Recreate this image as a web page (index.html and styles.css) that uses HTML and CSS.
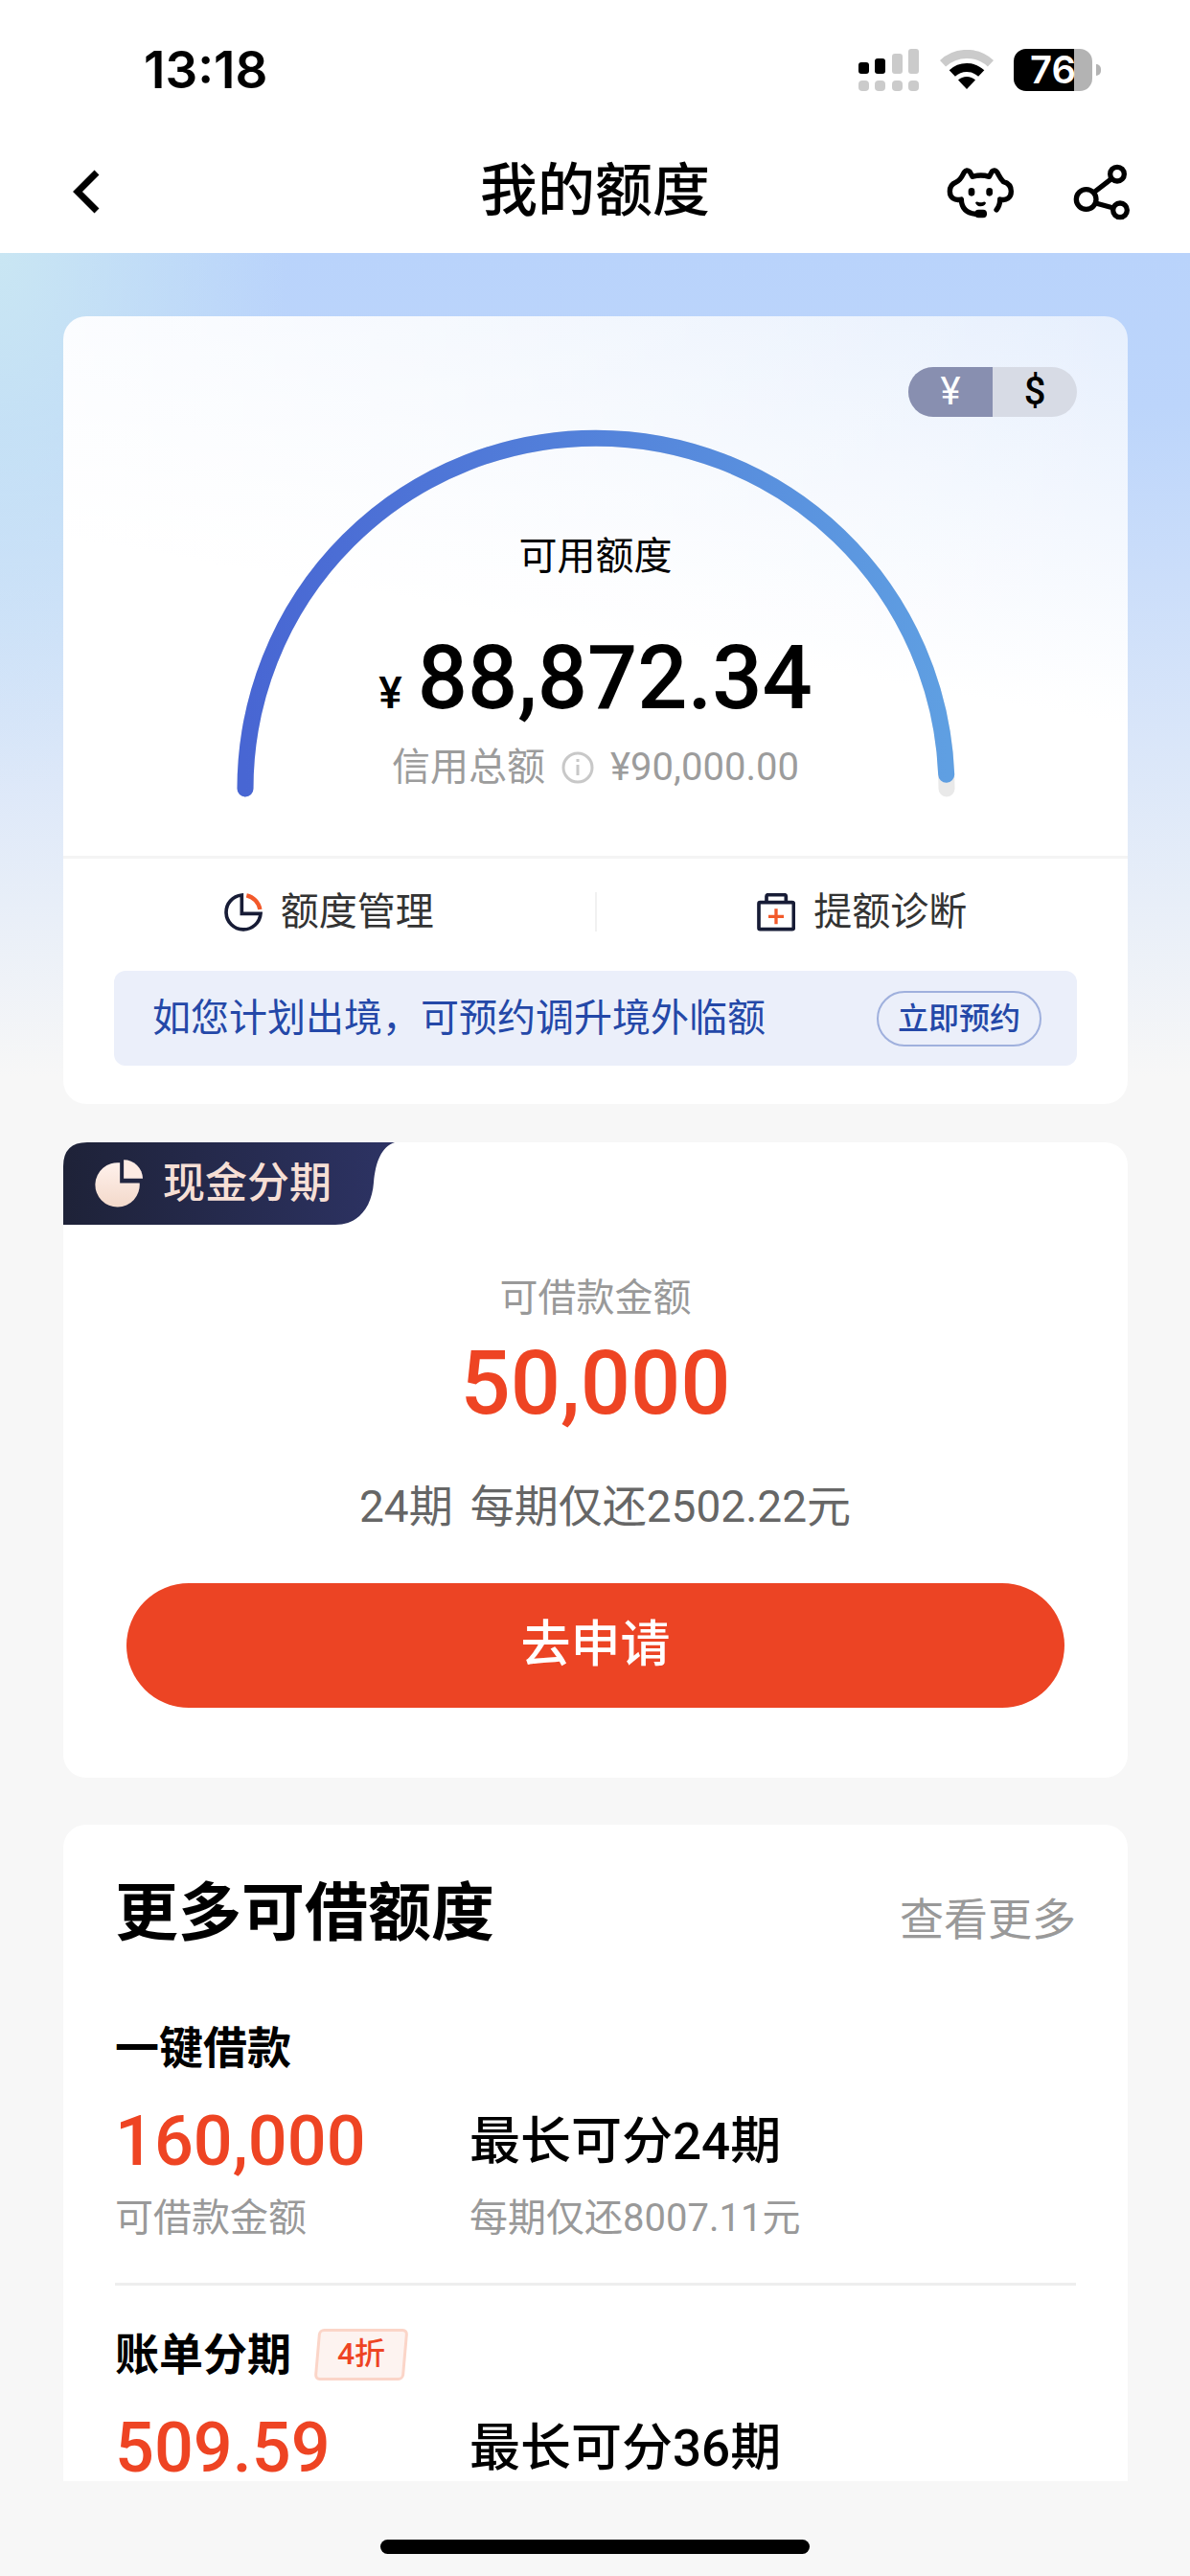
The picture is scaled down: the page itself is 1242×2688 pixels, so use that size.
FILE: index.html
```html
<!DOCTYPE html>
<html lang="zh-CN">
<head>
<meta charset="utf-8">
<meta name="viewport" content="width=device-width, initial-scale=1">
<title>我的额度</title>
<link rel="stylesheet" href="styles.css">
</head>
<body>
<div class="status">
  <span class="status-time">13:18</span>
  <div class="status-icons">
    <svg class="signal" viewBox="0 0 64 44" aria-hidden="true">
      <rect x="0" y="14" width="11" height="12" rx="3"/>
      <rect x="17" y="10" width="11" height="16" rx="3"/>
      <g fill="#cbcbcb">
        <rect x="35" y="5" width="11" height="21" rx="3"/>
        <rect x="52" y="0" width="11" height="26" rx="3"/>
        <rect x="0" y="33" width="11" height="11" rx="4"/>
        <rect x="17" y="33" width="11" height="11" rx="4"/>
        <rect x="35" y="33" width="11" height="11" rx="4"/>
        <rect x="52" y="33" width="11" height="11" rx="4"/>
      </g>
    </svg>
    <svg class="wifi" viewBox="0 0 56 42" aria-hidden="true">
      <path d="M3 14.3A36.5 36.5 0 0 1 53 14.3" fill="none" stroke="#cbcbcb" stroke-width="9"/>
      <path d="M12.8 24.6A22 22 0 0 1 43.2 24.6" fill="none" stroke="#000" stroke-width="9"/>
      <path d="M28 41L19 31.5A13 13 0 0 1 37 31.5Z"/>
    </svg>
    <span class="battery">76</span>
  </div>
</div>

<header class="nav">
  <button class="icon-btn" type="button" aria-label="返回">
    <svg class="chevron" viewBox="0 0 30 48"><path d="M26 4L6 24L26 44" fill="none" stroke="#000" stroke-width="7"/></svg>
  </button>
  <h1 class="nav-title">我的额度</h1>
  <div class="nav-tools">
    <button class="icon-btn" type="button" aria-label="客服">
      <svg class="dog" viewBox="375 455 219 165">
        <path d="M534 593Q545 580 545 560C566 566 580 554 580 535C580 518 570 509 556 505C546 496 541 483 536 475Q528 465 520 473L511 489Q485 481 459 489L450 473Q440 465 433 475C427 487 421 501 408 506C395 511 388 522 388 535C388 554 402 566 424 560Q425 602 470 606" fill="none" stroke="#000" stroke-width="16" stroke-linejoin="round" stroke-linecap="round"/>
        <rect x="466" y="592" width="38" height="26" rx="12"/>
        <path d="M468 571Q470 566 476 568Q485 571 493 568Q500 566 501 572Q496 582 485 582Q473 582 468 571Z"/>
        <rect x="446" y="524" width="20" height="26" rx="10"/>
        <rect x="502" y="524" width="20" height="26" rx="10"/>
      </svg>
    </button>
    <button class="icon-btn" type="button" aria-label="分享">
      <svg class="share" viewBox="778 452 177 177" fill="none" stroke="#000" stroke-width="16">
        <circle cx="819" cy="563" r="31"/>
        <circle cx="916" cy="484" r="22"/>
        <circle cx="925" cy="597" r="22"/>
        <path d="M842 542L899 498M849 575L904 590"/>
      </svg>
    </button>
  </div>
</header>

<main class="page">
  <section class="card limit">
    <div class="currency">
      <button class="currency-item is-active" type="button">¥</button>
      <button class="currency-item" type="button">$</button>
    </div>

    <div class="gauge">
      <svg class="gauge-arc" viewBox="0 0 750 384" aria-hidden="true">
        <defs>
          <linearGradient id="arc" x1="0" x2="1" y1="0" y2="0">
            <stop offset="0" stop-color="#4866d3"/>
            <stop offset="1" stop-color="#5f9fe2"/>
          </linearGradient>
        </defs>
        <path d="M9 375A366 366 0 0 1 741 375" fill="none" stroke="#e9e9e9" stroke-width="17" stroke-linecap="round"/>
        <path d="M9 375A366 366 0 0 1 741 375" pathLength="1000" stroke-dasharray="987 1000" fill="none" stroke="url(#arc)" stroke-width="17" stroke-linecap="round"/>
      </svg>
      <div class="gauge-text">
        <p class="gauge-label">可用额度</p>
        <p class="gauge-amount"><span class="yen">¥</span>88,872.34</p>
        <p class="gauge-total">信用总额
          <svg class="info" viewBox="0 0 34 34" aria-hidden="true">
            <circle cx="17" cy="17" r="15" fill="none" stroke="#c8c8c8" stroke-width="3"/>
            <path d="M17 14V25M17 8V11" stroke="#c8c8c8" stroke-width="3"/>
          </svg>
          ¥90,000.00</p>
      </div>
    </div>

    <div class="actions">
      <a class="action" href="#manage">
        <svg class="action-icon" viewBox="101 98 120 120" fill="none" aria-hidden="true">
          <path d="M156 104V162H215A54 54 0 1 1 156 104Z" stroke="#171c36" stroke-width="11"/>
          <path d="M171 105A54 54 0 0 1 213 149" stroke="#f2592a" stroke-width="13"/>
        </svg>
        额度管理
      </a>
      <a class="action" href="#diagnose">
        <svg class="action-icon" viewBox="90 98 120 120" fill="none" aria-hidden="true">
          <rect x="96" y="127" width="109" height="84" rx="4" stroke="#171c36" stroke-width="11"/>
          <path d="M120 127V108Q120 103 125 103H176Q181 103 181 108V127" stroke="#171c36" stroke-width="11"/>
          <path d="M150 147V195M126 171H174" stroke="#f2592a" stroke-width="10"/>
        </svg>
        提额诊断
      </a>
    </div>

    <div class="notice">
      <span>如您计划出境，可预约调升境外临额</span>
      <button class="notice-btn" type="button">立即预约</button>
    </div>
  </section>

  <section class="card cash">
    <h2 class="tab">
      <svg class="tab-shape" viewBox="0 0 346 86" aria-hidden="true">
        <defs>
          <linearGradient id="tab" x1="0" x2="1" y1="0" y2="0">
            <stop offset="0" stop-color="#1e2238"/>
            <stop offset="1" stop-color="#2d3364"/>
          </linearGradient>
        </defs>
        <path d="M25 0H346C332 5 326 20 324 42C322 68 308 86 284 86H0V25Q0 0 25 0Z" fill="url(#tab)"/>
      </svg>
      <span class="tab-label">
        <svg class="tab-icon" viewBox="177 114 151 151" aria-hidden="true">
          <defs>
            <linearGradient id="pie" x1="0" x2="0" y1="0" y2="1">
              <stop offset="0" stop-color="#fff1ec"/>
              <stop offset="1" stop-color="#f3d9ca"/>
            </linearGradient>
          </defs>
          <path d="M256 124V188H318A70 70 0 1 1 256 124Z" fill="url(#pie)"/>
          <path d="M268 115A60 60 0 0 1 328 174H268Z" fill="#fdebe4"/>
        </svg>
        现金分期
      </span>
    </h2>
    <p class="cash-label">可借款金额</p>
    <p class="cash-amount">50,000</p>
    <p class="cash-plan"><span>24期</span><span>每期仅还2502.22元</span></p>
    <button class="apply" type="button">去申请</button>
  </section>

  <section class="card more">
    <div class="more-head">
      <h2 class="more-title">更多可借额度</h2>
      <a class="more-link" href="#more">查看更多</a>
    </div>
    <article class="offer">
      <h3 class="offer-name">一键借款</h3>
      <div class="offer-grid">
        <span class="offer-amount">160,000</span>
        <span class="offer-term">最长可分24期</span>
      </div>
      <div class="offer-grid offer-notes">
        <span>可借款金额</span>
        <span>每期仅还8007.11元</span>
      </div>
    </article>
    <article class="offer">
      <h3 class="offer-name">账单分期 <span class="badge">4折</span></h3>
      <div class="offer-grid">
        <span class="offer-amount">509.59</span>
        <span class="offer-term">最长可分36期</span>
      </div>
    </article>
  </section>
</main>

<footer class="home"><div class="home-bar"></div></footer>
</body>
</html>
```

FILE: styles.css
```css
* {
  box-sizing: border-box;
}

body {
  margin: 0;
  background: #f7f7f7;
  color: #000;
  font-family: Roboto, "Noto Sans CJK SC", sans-serif;
  font-size: 40px;
  line-height: 56px;
}

h1, h2, h3, p {
  margin: 0;
  font-weight: 500;
}

svg {
  display: block;
  flex: none;
}

button {
  padding: 0;
  border: 0;
  background: none;
  color: inherit;
  font: inherit;
}

a {
  color: inherit;
  text-decoration: none;
}

/* status bar */
.status {
  display: flex;
  align-items: center;
  justify-content: space-between;
  height: 136px;
  padding: 10px 102px 0 150px;
  background: #fff;
}

.status-time {
  font-family: Inter, sans-serif;
  font-size: 53px;
  font-weight: 600;
  line-height: 60px;
}

.status-icons {
  display: flex;
  align-items: center;
  gap: 21px;
}

.signal {
  width: 64px;
  height: 44px;
}

.wifi {
  width: 56px;
  height: 42px;
}

.battery {
  position: relative;
  width: 82px;
  height: 44px;
  border-radius: 13px;
  background: linear-gradient(90deg, #000 63px, #b3b3b3 63px);
  color: #fff;
  font-family: Inter, sans-serif;
  font-size: 40px;
  font-weight: 600;
  line-height: 44px;
  text-align: center;
}

.battery::after {
  content: "";
  position: absolute;
  top: 16px;
  right: -9px;
  width: 5px;
  height: 12px;
  border-radius: 0 6px 6px 0;
  background: #b3b3b3;
}

/* navigation */
.nav {
  display: grid;
  grid-template-columns: 1fr auto 1fr;
  align-items: center;
  height: 128px;
  padding: 0 63px;
  background: #fff;
}

.nav-title {
  font-size: 60px;
  line-height: 84px;
}

.icon-btn {
  justify-self: start;
}

.nav > .icon-btn {
  padding-left: 12px;
}

.nav-tools {
  display: flex;
  align-items: center;
  justify-content: flex-end;
  gap: 60px;
}

.chevron {
  width: 30px;
  height: 48px;
}

.dog {
  width: 73px;
  height: 55px;
}

.share {
  width: 59px;
  height: 59px;
}

/* page */
.page {
  padding: 66px 65px 0 66px;
  background:
    radial-gradient(ellipse 300px 560px at 0 0, #c9e6f3, rgba(201, 230, 243, 0)) no-repeat,
    linear-gradient(180deg, #b9d3fb 0, #bcd5fb 160px, #f7f7f7 860px);
}

.card {
  border-radius: 24px;
  background: #fff;
}

.limit {
  padding: 53px 0 40px;
  margin-bottom: 40px;
  background:
    linear-gradient(90deg, rgba(255, 255, 255, 0.7), rgba(255, 255, 255, 0)),
    linear-gradient(190deg, #e6effd 0, #fff 420px);
}

.currency {
  display: flex;
  width: 176px;
  height: 52px;
  margin: 0 53px 13px auto;
  border-radius: 26px;
  background: #d7dbe5;
  overflow: hidden;
}

.currency-item {
  flex: 1;
  font-size: 40px;
  font-weight: 500;
  line-height: 52px;
}

.currency-item.is-active {
  background: #888fb0;
  color: #fff;
  font-weight: 400;
}

.gauge {
  display: grid;
  justify-items: center;
  margin-bottom: 61px;
}

.gauge-arc,
.gauge-text {
  grid-area: 1 / 1;
}

.gauge-arc {
  width: 750px;
  height: 384px;
}

.gauge-text {
  padding-top: 105px;
  text-align: center;
}

.gauge-label {
  font-weight: 400;
}

.gauge-amount {
  margin: 49px 0 15px;
  font-size: 92px;
  line-height: 100px;
}

.yen {
  margin-right: 16px;
  font-size: 46px;
  line-height: 46px;
}

.gauge-total {
  display: flex;
  align-items: center;
  justify-content: center;
  gap: 17px;
  color: #9c9c9c;
  font-weight: 400;
}

.info {
  width: 34px;
  height: 34px;
}

.actions {
  display: flex;
  height: 120px;
  padding: 35px 0 41px;
  border-top: 3px solid #f4f4f4;
}

.action {
  display: flex;
  flex: 1;
  align-items: center;
  justify-content: center;
  gap: 19px;
  color: #333;
}

.action + .action {
  border-left: 2px solid #f1f1f1;
}

.action-icon {
  width: 40px;
  height: 40px;
}

.notice {
  display: flex;
  align-items: center;
  justify-content: space-between;
  height: 99px;
  margin: 0 53px;
  padding: 0 37px 0 40px;
  border-radius: 12px;
  background: #ebeffa;
  color: #2448a8;
}

.notice-btn {
  width: 172px;
  height: 58px;
  border: 2px solid #9fb0dd;
  border-radius: 29px;
  font-size: 32px;
  font-weight: 500;
  line-height: 54px;
}

/* cash instalments */
.cash {
  padding: 0 66px 73px;
  margin-bottom: 49px;
  text-align: center;
}

.tab {
  display: grid;
  justify-items: start;
  align-items: center;
  height: 86px;
  margin: 0 -66px 49px;
}

.tab-shape,
.tab-label {
  grid-area: 1 / 1;
}

.tab-shape {
  width: 346px;
  height: 86px;
}

.tab-label {
  display: flex;
  align-items: center;
  gap: 21px;
  padding-left: 33px;
  color: #f6dfd5;
  font-size: 44px;
}

.tab-icon {
  width: 50px;
  height: 50px;
}

.cash-label {
  color: #999;
  font-weight: 400;
}

.cash-amount {
  margin: 11px 0 48px;
  color: #ee4423;
  font-size: 92px;
  line-height: 100px;
}

.cash-plan {
  display: flex;
  justify-content: center;
  gap: 18px;
  padding-left: 20px;
  color: #666;
  font-size: 46px;
  font-weight: 400;
  line-height: 60px;
}

.apply {
  width: 100%;
  height: 130px;
  margin-top: 50px;
  border-radius: 65px;
  background: #ec4424;
  color: #fff;
  font-size: 52px;
  font-weight: 500;
}

/* more offers */
.more {
  padding: 47px 54px 0;
  border-radius: 24px 24px 0 0;
}

.more-head {
  display: flex;
  align-items: baseline;
  justify-content: space-between;
  margin-bottom: 64px;
}

.more-title {
  font-size: 66px;
  font-weight: 700;
  line-height: 92px;
}

.more-link {
  color: #999;
  font-size: 46px;
  line-height: 60px;
}

.offer + .offer {
  margin-top: 39px;
  padding-top: 42px;
  border-top: 3px solid #eee;
}

.offer-name {
  display: flex;
  align-items: center;
  gap: 26px;
  height: 60px;
  margin-bottom: 34px;
  font-size: 46px;
  font-weight: 700;
  line-height: 60px;
}

.badge {
  position: relative;
  z-index: 0;
  width: 94px;
  height: 54px;
  color: #ee4423;
  font-size: 32px;
  font-weight: 500;
  line-height: 52px;
  text-align: center;
}

.badge::before {
  content: "";
  position: absolute;
  inset: 0;
  z-index: -1;
  border: 3px solid #fbd5c8;
  border-radius: 6px;
  background: #fdf3f0;
  transform: skewX(-5deg);
}

.offer-grid {
  display: grid;
  grid-template-columns: 370px 1fr;
  align-items: center;
}

.offer-amount {
  color: #ee4423;
  font-size: 72px;
  font-weight: 500;
  line-height: 68px;
}

.offer-term {
  font-size: 53px;
  font-weight: 500;
  line-height: 68px;
}

.offer-notes {
  margin-top: 18px;
  color: #999;
}

/* home indicator */
.home {
  padding: 61px 0 23px;
}

.home-bar {
  width: 36%;
  height: 15px;
  margin: 0 auto;
  border-radius: 8px;
  background: #000;
}
```
